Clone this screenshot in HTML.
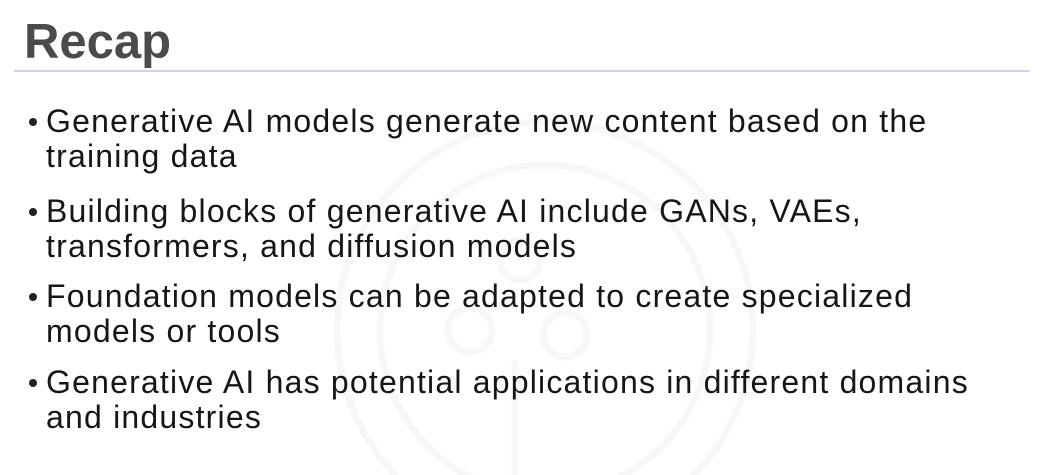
<!DOCTYPE html>
<html><head><meta charset="utf-8"><style>
html,body{margin:0;padding:0;}
body{width:1061px;height:475px;background:#fff;position:relative;overflow:hidden;font-family:"Liberation Sans",sans-serif;}
.t{position:absolute;left:24px;top:14px;font-size:49px;font-weight:bold;color:#4b4b4b;}
.hr{position:absolute;left:14px;top:70px;width:1016px;height:2px;background:#d3cfe4;}
.b{position:absolute;left:46px;font-size:32px;letter-spacing:1.2px;line-height:35px;color:#161616;white-space:nowrap;}
.d{position:absolute;left:-17px;top:14px;width:8px;height:8px;border-radius:50%;background:#222;}
svg{position:absolute;left:0;top:0;}
</style></head><body>
<svg width="1061" height="475"><g fill="none" stroke="#f7f7f7" stroke-width="7">
<circle cx="545" cy="330" r="208"/><circle cx="545" cy="330" r="165"/>
<circle cx="470" cy="330" r="22"/><circle cx="565" cy="335" r="22"/><circle cx="520" cy="260" r="20"/>
<line x1="515" y1="360" x2="515" y2="475"/></g></svg>
<div class="t">Recap</div>
<div class="hr"></div>
<div class="b" style="top:104px"><span class="d"></span>Generative AI models generate new content based on the<br>training data</div>
<div class="b" style="top:194px"><span class="d"></span>Building blocks of generative AI include GANs, VAEs,<br>transformers, and diffusion models</div>
<div class="b" style="top:279px"><span class="d"></span>Foundation models can be adapted to create specialized<br>models or tools</div>
<div class="b" style="top:365px"><span class="d"></span>Generative AI has potential applications in different domains<br>and industries</div>
</body></html>
